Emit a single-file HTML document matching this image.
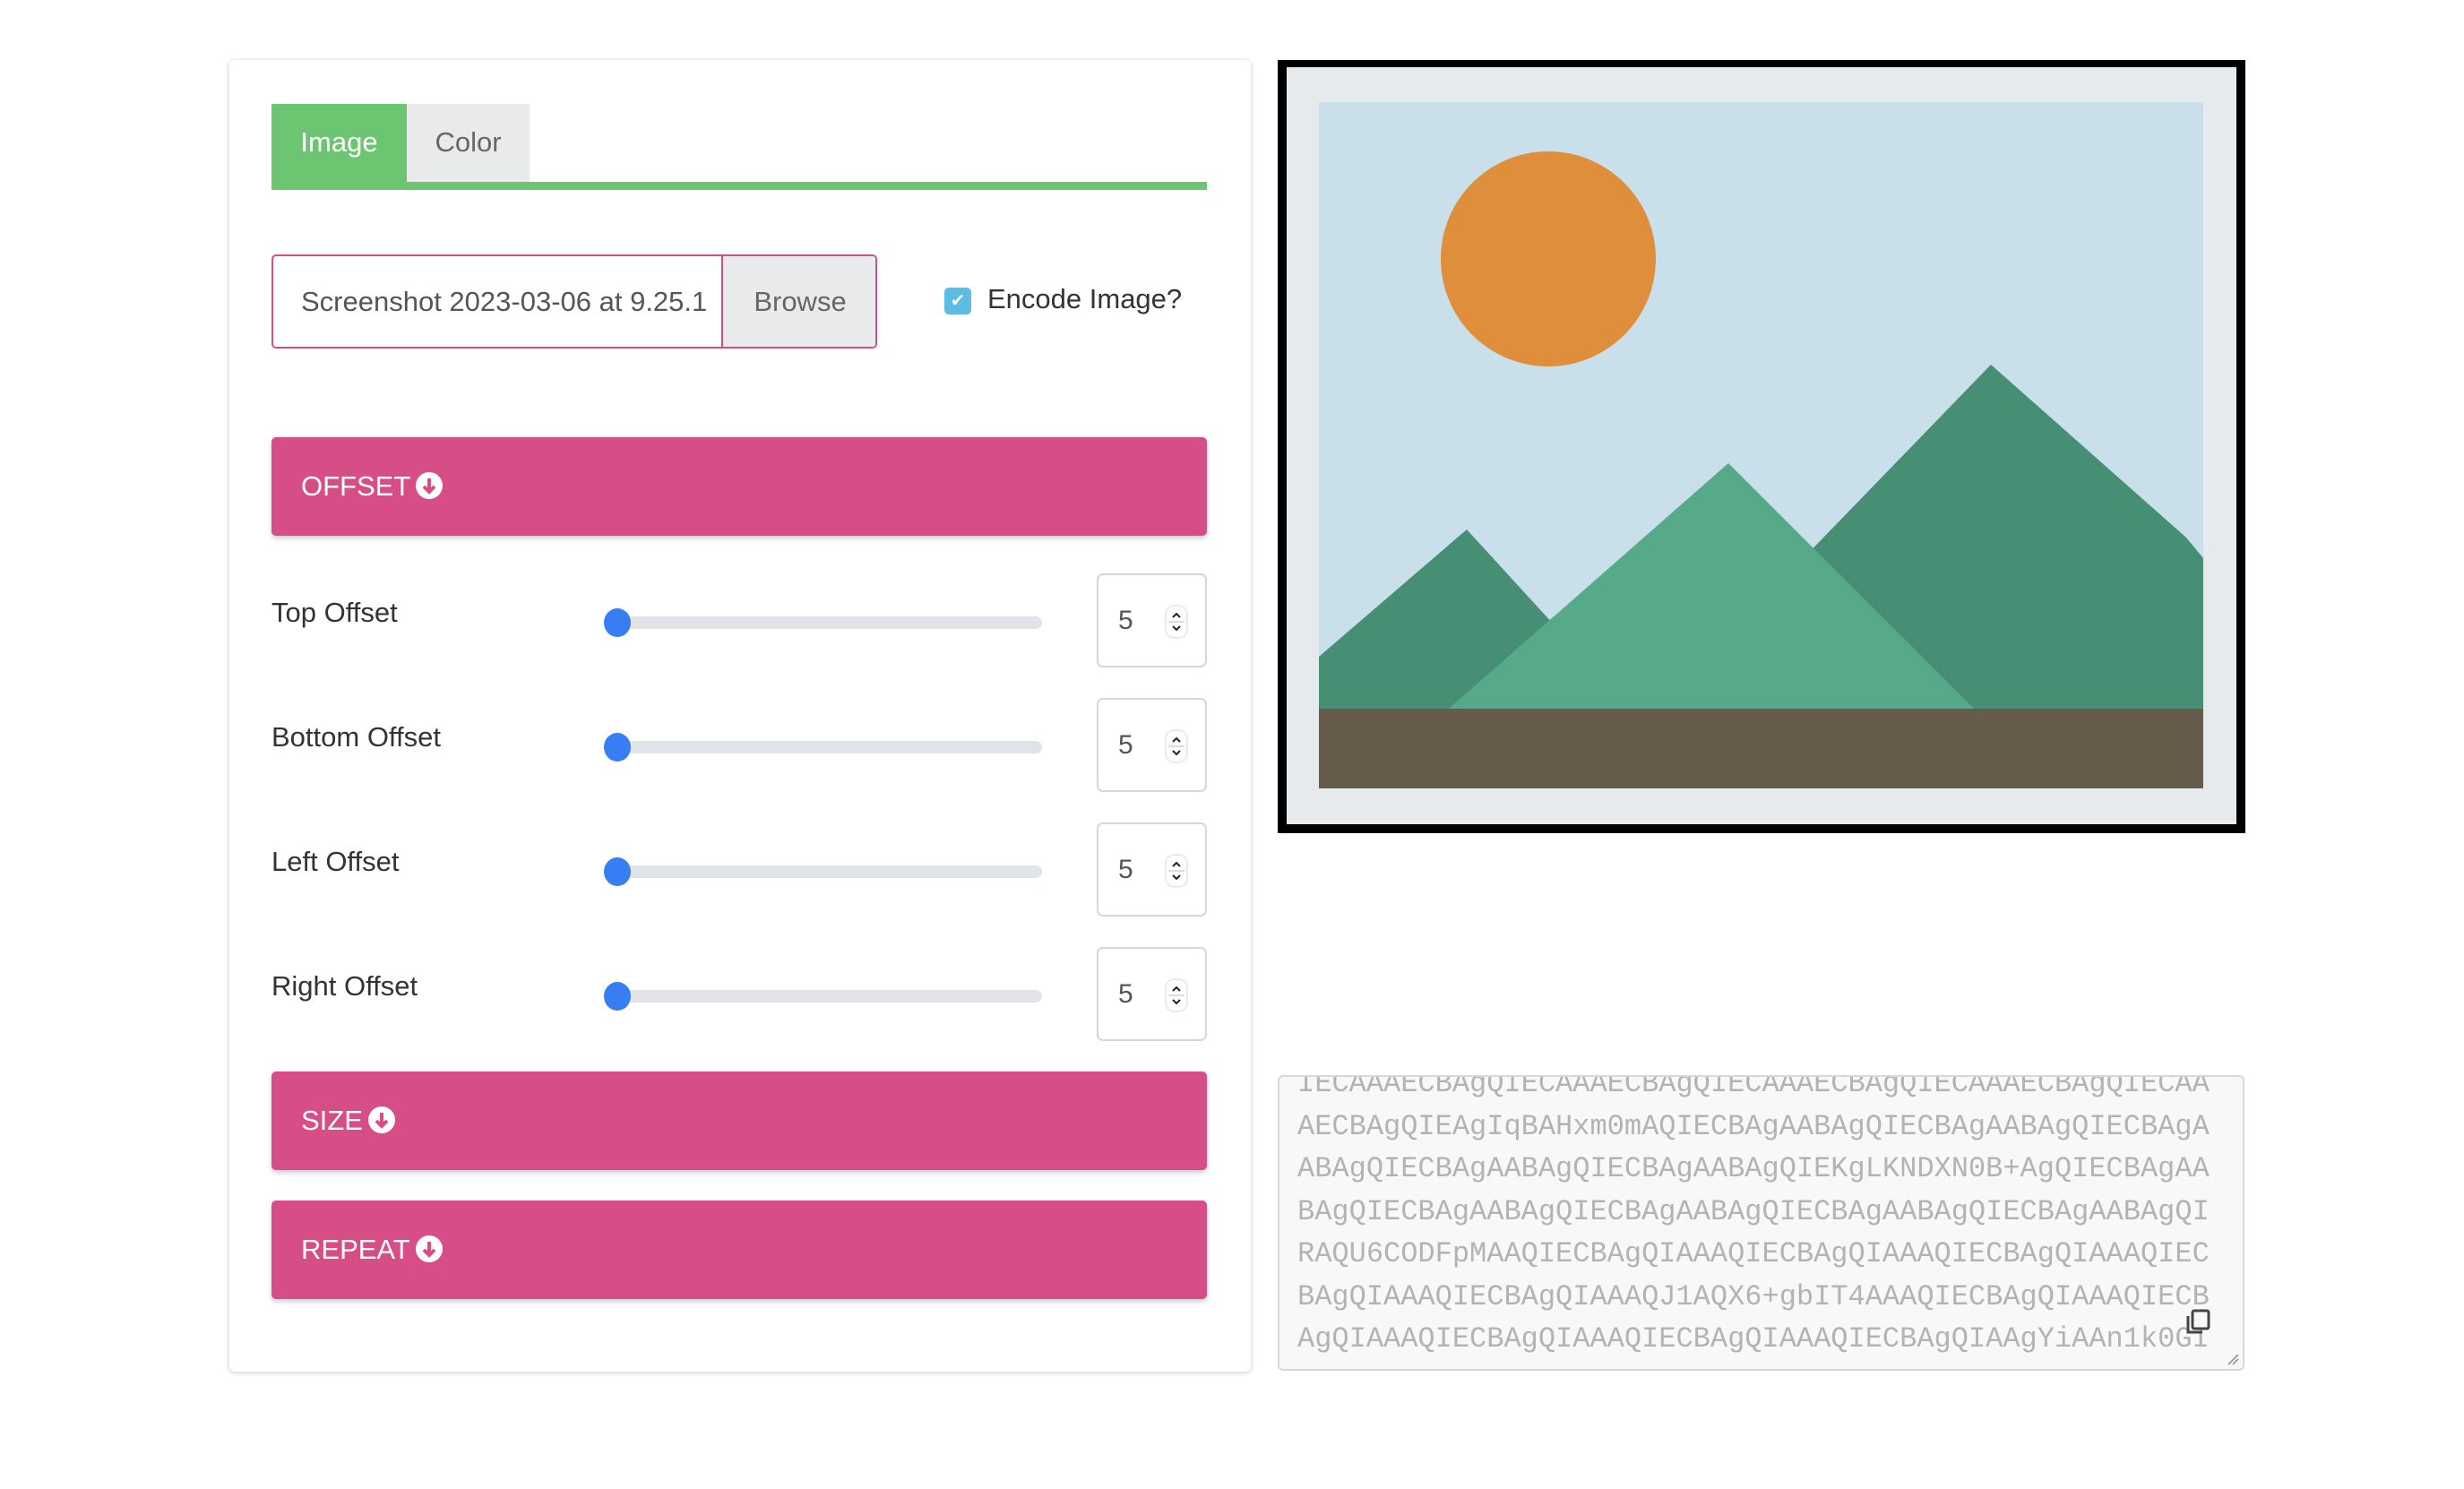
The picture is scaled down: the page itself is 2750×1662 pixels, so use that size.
<!DOCTYPE html>
<html><head><meta charset="utf-8"><style>
*{box-sizing:border-box;margin:0;padding:0}
body{width:2750px;height:1662px;background:#fff;font-family:"Liberation Sans",sans-serif;position:relative;overflow:hidden}
.a{position:absolute}
.card{left:256px;top:67px;width:1140px;height:1464px;border-radius:6px;box-shadow:0 1px 6px rgba(0,0,0,.22);background:#fff}
.bar{left:303px;width:1044px;height:110px;background:#d64d88;border-radius:5px;box-shadow:0 3px 6px rgba(0,0,0,.2);color:#fff;font-size:31px;line-height:110px;padding-left:33px}
.ic{display:inline-block;width:30px;height:30px;border-radius:50%;background:#fff;vertical-align:-4px;margin-left:6px;position:relative}
.lab{left:303px;font-size:31px;color:#333}
.track{left:676px;width:487px;height:14px;border-radius:7px;background:#e0e3e8}
.thumb{left:674px;width:30px;height:32px;border-radius:50%;background:#377ef5}
.num{left:1224px;width:123px;height:105px;border:2px solid #d3d6da;border-radius:7px;font-size:30px;color:#555;padding-left:22px;line-height:101px}
.sp{position:absolute;left:76px;top:35px;width:22px;height:34px;border-radius:8px;box-shadow:0 0 3px rgba(0,0,0,.3);background:#fff;line-height:0}
.sp svg{display:block}
.ta{left:1426px;top:1200px;width:1079px;height:330px;border:2px solid #d6d8da;border-radius:6px;background:#f8f8f8;overflow:hidden}
.ta pre{font-family:"Liberation Mono",monospace;font-size:32px;line-height:47.5px;color:#b3b3b3;position:absolute;left:20px;top:-16px;letter-spacing:0px}
</style></head><body>
<div class="a card"></div>
<div class="a" style="left:303px;top:116px;width:151px;height:96px;background:#6cc570;color:#fff;font-size:31px;line-height:86px;text-align:center">Image</div>
<div class="a" style="left:454px;top:116px;width:137px;height:87px;background:#e9eaec;color:#666;font-size:31px;line-height:86px;text-align:center">Color</div>
<div class="a" style="left:303px;top:203px;width:1044px;height:9px;background:#6cc570"></div>
<div class="a" style="left:303px;top:284px;width:676px;height:105px;border:2px solid #d64d88;border-radius:5px;overflow:hidden">
<div class="a" style="left:31px;top:0;line-height:101px;font-size:31px;color:#555;white-space:nowrap;width:470px;overflow:hidden">Screenshot 2023-03-06 at 9.25.1</div>
<div class="a" style="left:500px;top:0;width:174px;height:101px;background:#e9eaec;border-left:2px solid #d64d88;font-size:31px;color:#666;line-height:101px;text-align:center">Browse</div></div>
<div class="a" style="left:1054px;top:321px;width:30px;height:30px;border-radius:5px;background:#5bbde3;color:#fff;font-size:20px;text-align:center;line-height:30px">✔</div>
<div class="a" style="left:1102px;top:316px;font-size:31px;color:#333">Encode Image?</div>
<div class="a bar" style="top:488px">OFFSET<span class="ic"><svg width="30" height="30" viewBox="0 0 30 30" style="position:absolute;left:0;top:0"><path d="M15 7v15M9 16l6 6 6-6" stroke="#d64d88" stroke-width="4" fill="none"/></svg></span></div>
<div class="a lab" style="top:666px">Top Offset</div>
<div class="a track" style="top:688px"></div><div class="a thumb" style="top:679px"></div>
<div class="a num" style="top:640px">5<div class="sp"><svg width="22" height="34" viewBox="0 0 22 34"><path d="M7 12l4-4 4 4M7 22l4 4 4-4" stroke="#222" stroke-width="2" fill="none"/><path d="M2 17h18" stroke="#ddd" stroke-width="2"/></svg></div></div>
<div class="a lab" style="top:805px">Bottom Offset</div>
<div class="a track" style="top:827px"></div><div class="a thumb" style="top:818px"></div>
<div class="a num" style="top:779px">5<div class="sp"><svg width="22" height="34" viewBox="0 0 22 34"><path d="M7 12l4-4 4 4M7 22l4 4 4-4" stroke="#222" stroke-width="2" fill="none"/><path d="M2 17h18" stroke="#ddd" stroke-width="2"/></svg></div></div>
<div class="a lab" style="top:944px">Left Offset</div>
<div class="a track" style="top:966px"></div><div class="a thumb" style="top:957px"></div>
<div class="a num" style="top:918px">5<div class="sp"><svg width="22" height="34" viewBox="0 0 22 34"><path d="M7 12l4-4 4 4M7 22l4 4 4-4" stroke="#222" stroke-width="2" fill="none"/><path d="M2 17h18" stroke="#ddd" stroke-width="2"/></svg></div></div>
<div class="a lab" style="top:1083px">Right Offset</div>
<div class="a track" style="top:1105px"></div><div class="a thumb" style="top:1096px"></div>
<div class="a num" style="top:1057px">5<div class="sp"><svg width="22" height="34" viewBox="0 0 22 34"><path d="M7 12l4-4 4 4M7 22l4 4 4-4" stroke="#222" stroke-width="2" fill="none"/><path d="M2 17h18" stroke="#ddd" stroke-width="2"/></svg></div></div>
<div class="a bar" style="top:1196px">SIZE<span class="ic"><svg width="30" height="30" viewBox="0 0 30 30" style="position:absolute;left:0;top:0"><path d="M15 7v15M9 16l6 6 6-6" stroke="#d64d88" stroke-width="4" fill="none"/></svg></span></div>
<div class="a bar" style="top:1340px">REPEAT<span class="ic"><svg width="30" height="30" viewBox="0 0 30 30" style="position:absolute;left:0;top:0"><path d="M15 7v15M9 16l6 6 6-6" stroke="#d64d88" stroke-width="4" fill="none"/></svg></span></div>
<svg class="a" style="left:1426px;top:67px" width="1080" height="863" viewBox="1426 67 1080 863">
<rect x="1426" y="67" width="1080" height="863" fill="#000"/>
<rect x="1436" y="75" width="1060" height="845" fill="#e6eaec"/>
<rect x="1472" y="114" width="987" height="766" fill="#c9dfe9"/>
<circle cx="1728" cy="289" r="120" fill="#df8f3b"/>
<polygon points="1472,733 1637,591 1820,791 1472,791" fill="#468f74"/>
<polygon points="1850,791 2222,407 2440,600 2459,623 2459,791" fill="#468f74"/>
<polygon points="1617,791 1929,517 2203,791" fill="#56aa89"/>
<rect x="1472" y="791" width="987" height="89" fill="#675c4c"/>
</svg>
<div class="a ta"><pre>IECAAAECBAgQIECAAAECBAgQIECAAAECBAgQIECAAAECBAgQIECAA
AECBAgQIEAgIqBAHxm0mAQIECBAgAABAgQIECBAgAABAgQIECBAgA
ABAgQIECBAgAABAgQIECBAgAABAgQIEKgLKNDXN0B+AgQIECBAgAA
BAgQIECBAgAABAgQIECBAgAABAgQIECBAgAABAgQIECBAgAABAgQI
RAQU6CODFpMAAQIECBAgQIAAAQIECBAgQIAAAQIECBAgQIAAAQIEC
BAgQIAAAQIECBAgQIAAAQJ1AQX6+gbIT4AAAQIECBAgQIAAAQIECB
AgQIAAAQIECBAgQIAAAQIECBAgQIAAAQIECBAgQIAAgYiAAn1k0GI</pre>
<svg class="a" style="left:1010px;top:258px" width="32" height="32" viewBox="0 0 32 32"><rect x="9" y="3" width="18" height="20" rx="2" fill="#f8f8f8" stroke="#444" stroke-width="3"/><path d="M4 9v18h16" fill="none" stroke="#444" stroke-width="3"/></svg>
<svg class="a" style="right:4px;bottom:4px" width="14" height="14"><path d="M2 13L13 2M7 13l6-6" stroke="#888" stroke-width="1.5"/></svg>
</div>
</body></html>
